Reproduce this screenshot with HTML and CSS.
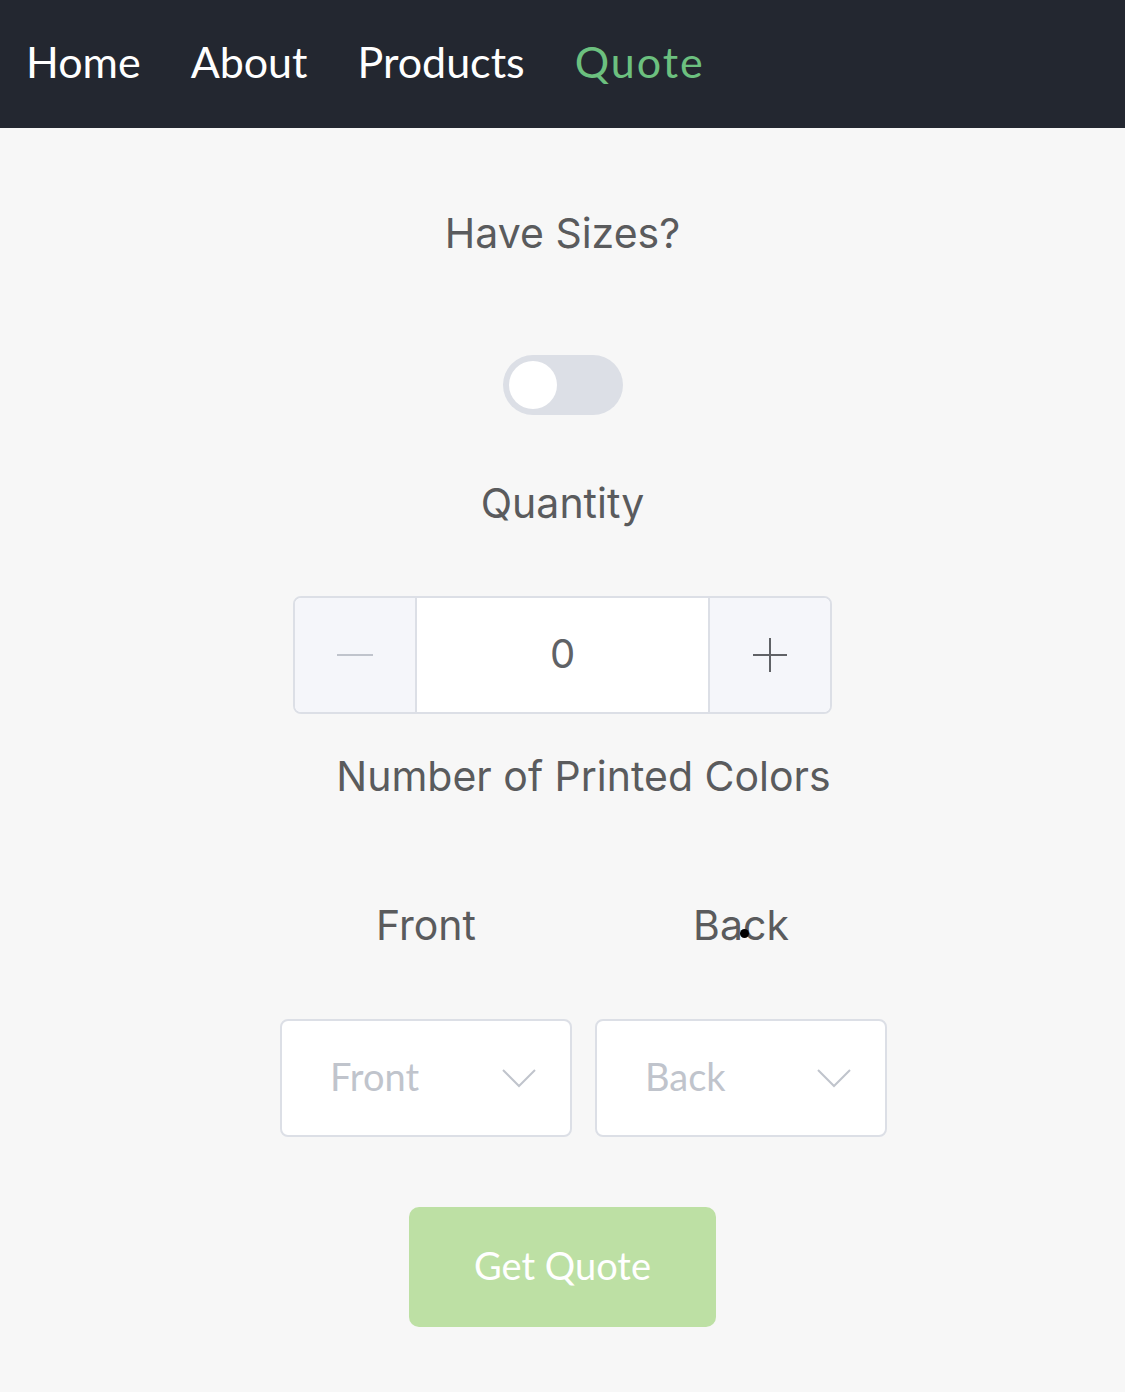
FILE: index.html
```html
<!DOCTYPE html>
<html>
<head>
<meta charset="utf-8">
<link rel="stylesheet" href="styles.css">
</head>
<body>
<nav class="nav">
  <a class="nav-link">Home</a>
  <a class="nav-link">About</a>
  <a class="nav-link">Products</a>
  <a class="nav-link active">Quote</a>
</nav>
<main class="main">
  <div class="label label-sizes">Have Sizes?</div>
  <div class="switch"><span class="knob"></span></div>
  <div class="label label-qty">Quantity</div>
  <div class="stepper">
    <div class="step-btn minus"><span class="minus-bar"></span></div>
    <div class="step-value">0</div>
    <div class="step-btn plus">
      <svg width="36" height="36" viewBox="0 0 36 36"><path d="M18 1v34M1 18h34" stroke="#606266" stroke-width="2" fill="none"/></svg>
    </div>
  </div>
  <section class="colors">
    <div class="label label-colors">Number of Printed Colors</div>
    <div class="cols cols-labels">
      <div class="col-label">Front</div>
      <div class="col-label back-label">Back<span class="dot"></span></div>
    </div>
    <div class="cols cols-selects">
      <div class="select"><span class="placeholder">Front</span>
        <svg class="chev" width="34" height="20" viewBox="0 0 34 20"><path d="M1 2l16 16L33 2" stroke="#c0c4cc" stroke-width="2" fill="none"/></svg>
      </div>
      <div class="select"><span class="placeholder">Back</span>
        <svg class="chev" width="34" height="20" viewBox="0 0 34 20"><path d="M1 2l16 16L33 2" stroke="#c0c4cc" stroke-width="2" fill="none"/></svg>
      </div>
    </div>
  </section>
  <button class="quote-btn">Get Quote</button>
</main>
</body>
</html>
```
FILE: styles.css
```css
html, body { margin: 0; padding: 0; }
body { background: #f7f7f7; width: 1125px; height: 1392px; overflow: hidden; font-family: "Inter", "Liberation Sans", sans-serif; }
.nav { height: 128px; background: #232730; display: flex; align-items: center; padding: 0 0 6px 26px; gap: 50px; box-sizing: border-box; }
.nav-link { font-family: "Lato", "Liberation Sans", sans-serif; font-size: 43px; color: #ffffff; line-height: 1; }
.nav-link.active { color: #6cc07f; letter-spacing: 2px; }
.main { display: flex; flex-direction: column; align-items: center; }
.label { font-size: 41px; color: #5a5b5d; line-height: 60px; text-align: center; }
.label-sizes { margin-top: 75px; }
.switch { margin-top: 92px; width: 120px; height: 60px; border-radius: 30px; background: #dcdfe6; box-sizing: border-box; padding: 6px; display: flex; }
.knob { width: 48px; height: 48px; border-radius: 50%; background: #fff; }
.label-qty { margin-top: 58px; }
.stepper { margin-top: 63px; width: 539px; height: 118px; box-sizing: border-box; border: 2px solid #dcdfe6; border-radius: 8px; display: flex; overflow: hidden; background: #fff; }
.step-btn { width: 120px; background: #f5f6fa; display: flex; align-items: center; justify-content: center; }
.minus { border-right: 2px solid #dcdfe6; }
.plus { border-left: 2px solid #dcdfe6; }
.minus-bar { width: 36px; height: 2px; background: #c0c4cc; }
.step-value { flex: 1; display: flex; align-items: center; justify-content: center; font-size: 40px; color: #606266; padding-bottom: 4px; }
.colors { display: flex; flex-direction: column; align-items: center; padding-left: 42px; }
.label-colors { margin-top: 32px; }
.cols { display: flex; gap: 23px; }
.cols-labels { margin-top: 89px; }
.col-label { width: 292px; text-align: center; font-size: 41px; color: #5a5b5d; line-height: 60px; }
.back-label { position: relative; }
.dot { position: absolute; left: 145px; top: 34px; width: 9px; height: 9px; border-radius: 50%; background: #000; }
.cols-selects { margin-top: 64px; }
.select { width: 292px; height: 118px; box-sizing: border-box; border: 2px solid #dcdfe6; border-radius: 8px; background: #fff; display: flex; align-items: center; justify-content: space-between; padding: 0 34px 4px 48px; }
.chev { margin-top: 4px; }
.placeholder { font-family: "Lato", "Liberation Sans", sans-serif; font-size: 38px; color: #c0c4cc; }
.quote-btn { margin-top: 70px; width: 307px; height: 120px; border: none; border-radius: 10px; background: #bde0a4; color: #fff; font-family: "Lato", "Liberation Sans", sans-serif; font-size: 38px; padding: 0 0 4px 0; }
```
